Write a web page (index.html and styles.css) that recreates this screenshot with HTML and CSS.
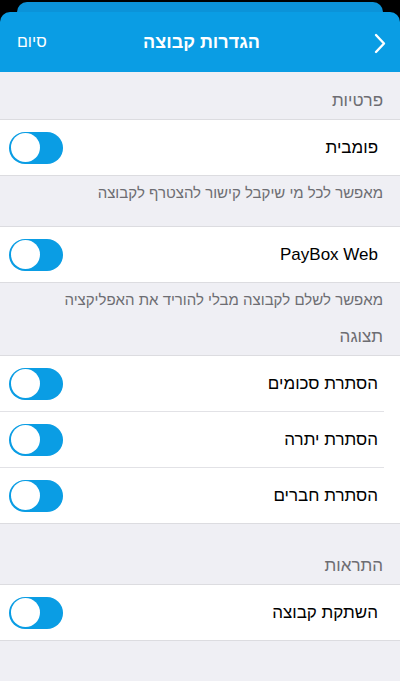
FILE: index.html
```html
<!DOCTYPE html>
<html lang="he" dir="rtl">
<head>
<meta charset="utf-8">
<title>הגדרות קבוצה</title>
<link rel="stylesheet" href="styles.css">
</head>
<body>
<div class="screen">
  <div class="top">
    <div class="back-card"></div>
    <header class="nav">
      <span class="nav-back">
        <svg width="12" height="21" viewBox="0 0 12 21"><polyline points="2,2 10,10.5 2,19" fill="none" stroke="#fff" stroke-width="2.4" stroke-linecap="round" stroke-linejoin="round"/></svg>
      </span>
      <h1 class="nav-title">הגדרות קבוצה</h1>
      <span class="nav-done">סיום</span>
    </header>
  </div>

  <div class="sec-head sec-first">פרטיות</div>
  <div class="card">
    <div class="row"><span class="label">פומבית</span><span class="toggle"><span class="knob"></span></span></div>
  </div>
  <div class="sec-foot">מאפשר לכל מי שיקבל קישור להצטרף לקבוצה</div>

  <div class="card">
    <div class="row"><span class="label">PayBox Web</span><span class="toggle"><span class="knob"></span></span></div>
  </div>
  <div class="sec-foot sec-foot-tight">מאפשר לשלם לקבוצה מבלי להוריד את האפליקציה</div>

  <div class="sec-head sec-mid">תצוגה</div>
  <div class="card">
    <div class="row"><span class="label">הסתרת סכומים</span><span class="toggle"><span class="knob"></span></span></div>
    <div class="row"><span class="label">הסתרת יתרה</span><span class="toggle"><span class="knob"></span></span></div>
    <div class="row"><span class="label">הסתרת חברים</span><span class="toggle"><span class="knob"></span></span></div>
  </div>

  <div class="sec-head sec-far">התראות</div>
  <div class="card">
    <div class="row"><span class="label">השתקת קבוצה</span><span class="toggle"><span class="knob"></span></span></div>
  </div>
</div>
</body>
</html>
```

FILE: styles.css
```css
* { box-sizing: border-box; }
html, body { margin: 0; padding: 0; }
body {
  font-family: "Liberation Sans", "DejaVu Sans", sans-serif;
  background: #efeff4;
}
.screen {
  width: 400px;
  min-height: 681px;
  background: #efeff4;
  overflow: hidden;
}
.top {
  background: #000;
  padding-top: 2px;
}
.back-card {
  margin: 0 17px;
  height: 10px;
  background: #0b93d9;
  border-radius: 10px 10px 0 0;
}
.nav {
  height: 60px;
  background: #0a9de4;
  border-radius: 10px 10px 0 0;
  display: grid;
  grid-template-columns: 1fr auto 1fr;
  align-items: center;
  padding: 0 14px 0 17px;
  color: #fff;
}
.nav-back { display: flex; justify-self: start; padding-top: 2px; }
.nav-title {
  margin: 0;
  font-size: 18px;
  font-weight: bold;
  line-height: 22px;
}
.nav-done {
  justify-self: end;
  font-size: 16px;
  line-height: 20px;
}
.sec-head {
  color: #6d6d72;
  font-size: 17px;
  line-height: 20px;
  padding: 0 17px 8px;
}
.sec-first { padding-top: 19px; }
.sec-mid { padding-top: 18px; }
.sec-far { padding-top: 32px; }
.sec-foot {
  color: #6d6d72;
  font-size: 15px;
  line-height: 18px;
  padding: 8px 17px 24px;
}
.sec-foot-tight { padding-bottom: 0; }
.card {
  background: #fff;
  border-top: 1px solid #dcdce0;
  border-bottom: 1px solid #dcdce0;
}
.row {
  height: 55px;
  display: flex;
  align-items: center;
  justify-content: space-between;
  padding: 0 22px 0 9px;
}
.row + .row {
  border-top: 1px solid #e2e2e6;
  margin-right: 16px;
  padding-right: 6px;
  height: 56px;
}
.label {
  font-size: 17px;
  color: #000;
  line-height: 20px;
}
.toggle {
  width: 54px;
  height: 32px;
  border-radius: 16px;
  background: #0a9de4;
  display: flex;
  align-items: center;
  justify-content: flex-end;
  padding: 0 1.5px;
}
.knob {
  width: 29px;
  height: 29px;
  border-radius: 50%;
  background: #fff;
}
```
